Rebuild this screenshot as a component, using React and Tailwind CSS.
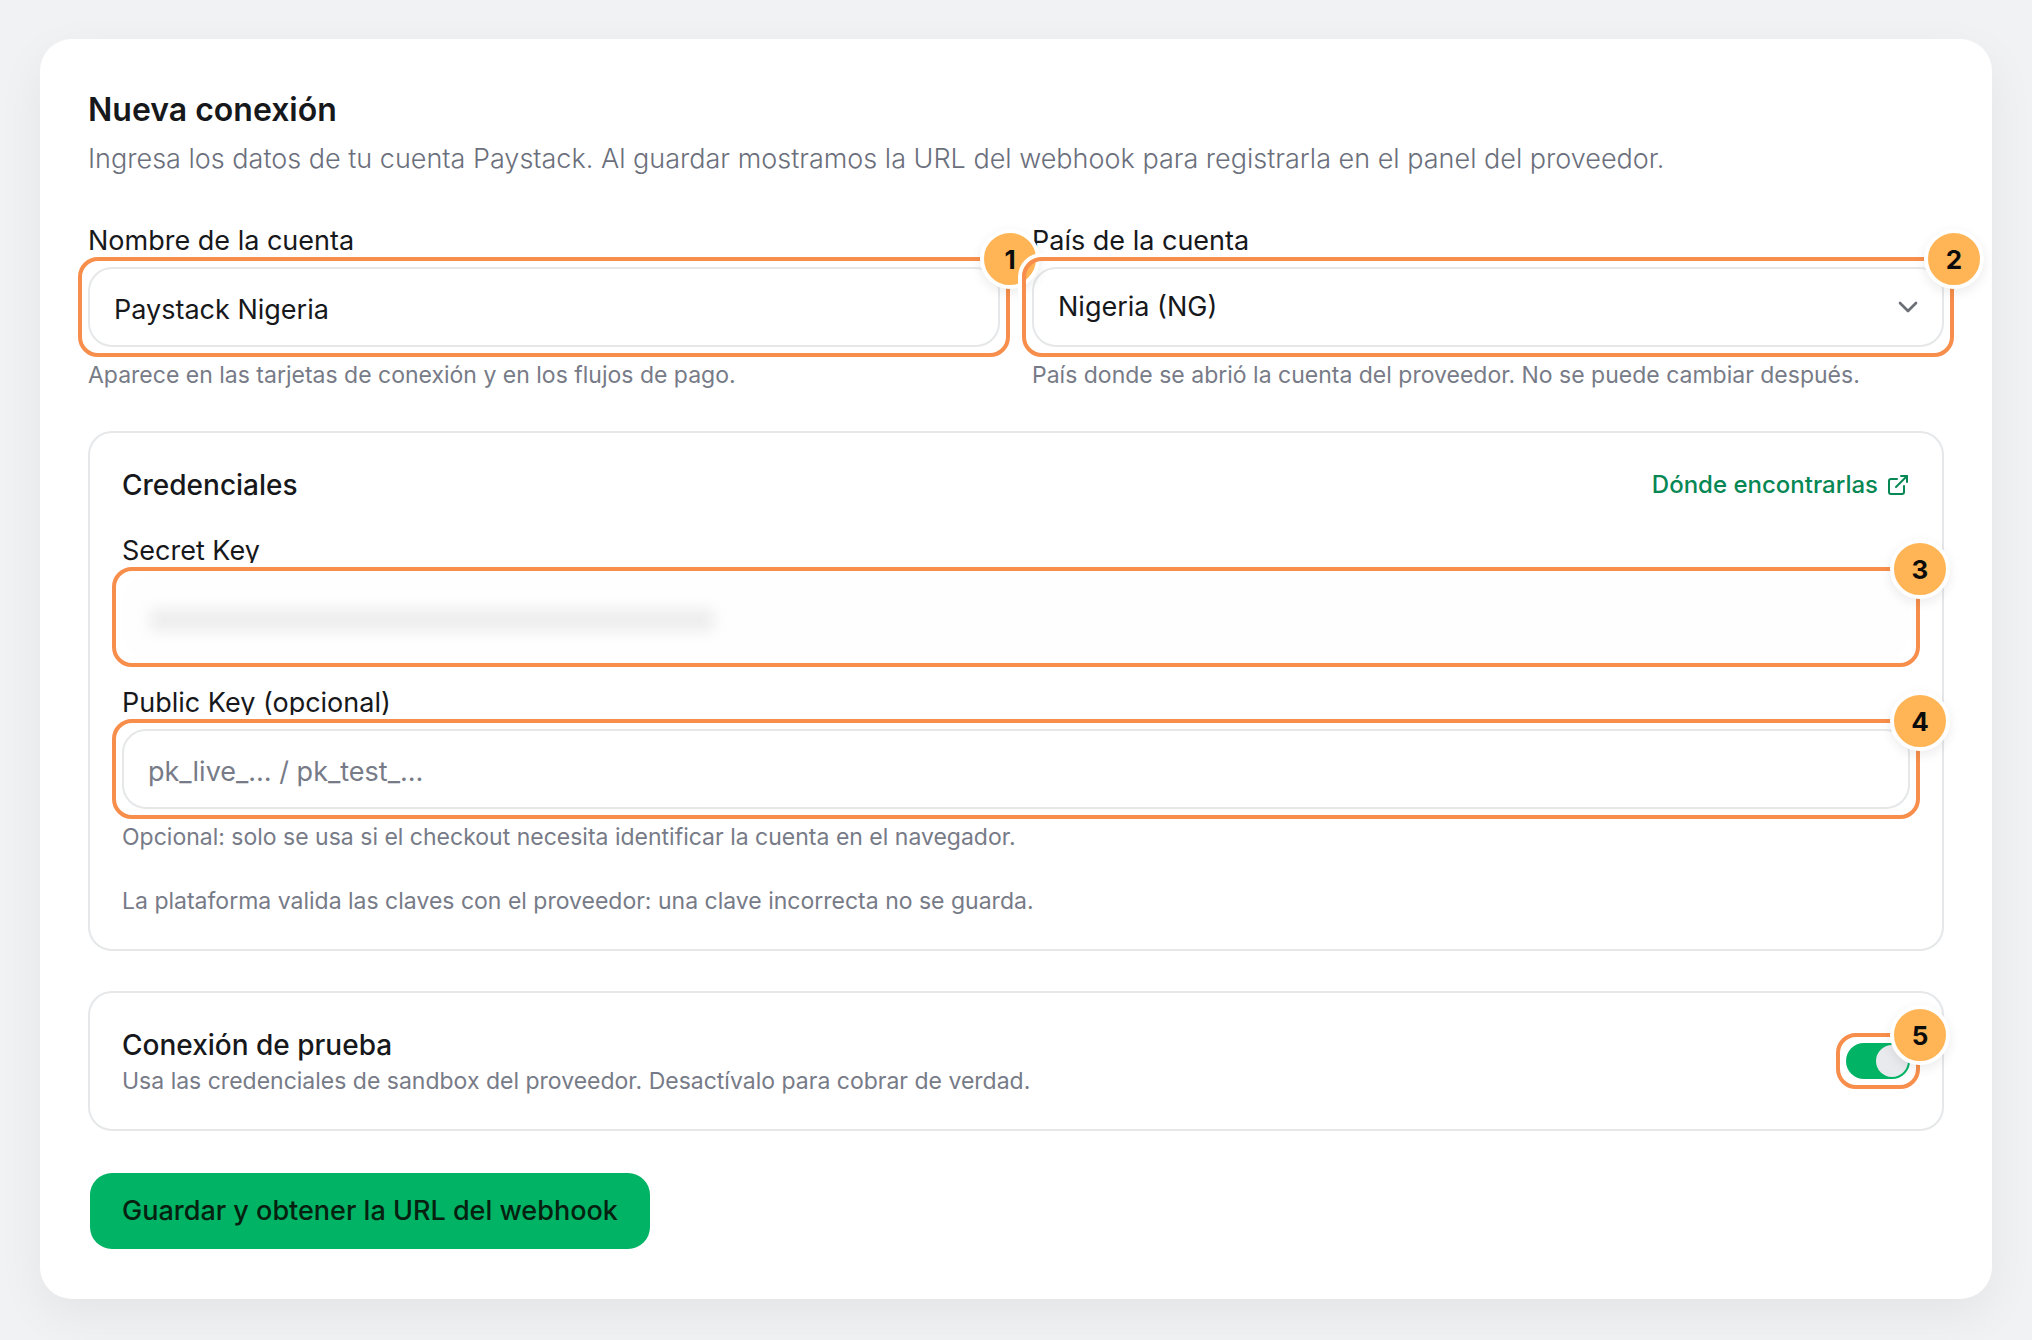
import { useState } from "react";
import { ChevronDown, ExternalLink } from "lucide-react";

const inputClass =
  "block h-20 w-full rounded-3xl border-2 border-[#e5e7e9] bg-white px-6 text-[27px] text-[#17181b] outline-none placeholder:text-[#777b87]";

function Marker({ number }) {
  return (
    <span className="pointer-events-none absolute -inset-2.5 z-10 rounded-[20px] border-4 border-[#f78e4b] shadow-[0_0_0_4px_#fff]">
      <span className="absolute -top-8 -right-[34px] flex size-15 items-center justify-center rounded-full border-4 border-white bg-[#ffb556] text-[26px] font-bold text-[#0c0c0c] shadow-[0_4px_12px_rgba(0,0,0,0.08)]">
        {number}
      </span>
    </span>
  );
}

function Field({ id, label, marker, hint, children }) {
  return (
    <div>
      <label htmlFor={id} className="mb-2 block text-[27px] leading-9">
        {label}
      </label>
      <div className="relative">
        {children}
        <Marker number={marker} />
      </div>
      {hint && <Hint className="mt-3">{hint}</Hint>}
    </div>
  );
}

function Hint({ className = "", children }) {
  return <p className={`text-[23px] leading-8 text-[#777b87] ${className}`}>{children}</p>;
}

export default function App() {
  const [name, setName] = useState("Paystack Nigeria");
  const [country, setCountry] = useState("NG");
  const [secretKey, setSecretKey] = useState("");
  const [publicKey, setPublicKey] = useState("");
  const [sandbox, setSandbox] = useState(true);

  return (
    <main className="min-h-screen bg-[#f1f2f4] px-10 pt-[39px] pb-10 font-['Inter',sans-serif] text-[#17181b]">
      <form
        onSubmit={(e) => e.preventDefault()}
        className="rounded-[32px] bg-white p-12 shadow-[0_16px_48px_rgba(0,0,0,0.06)]"
      >
        <header>
          <h1 className="text-[32px] leading-[46px] font-semibold">Nueva conexión</h1>
          <p className="mt-1.5 text-[27px] leading-10 font-light text-[#6b6f7c]">
            Ingresa los datos de tu cuenta Paystack. Al guardar mostramos la URL del webhook para registrarla en el
            panel del proveedor.
          </p>
        </header>

        <div className="mt-11 grid grid-cols-2 gap-8">
          <Field
            id="name"
            label="Nombre de la cuenta"
            marker={1}
            hint="Aparece en las tarjetas de conexión y en los flujos de pago."
          >
            <input
              id="name"
              type="text"
              value={name}
              onChange={(e) => setName(e.target.value)}
              className={`${inputClass} pt-1`}
            />
          </Field>
          <Field
            id="country"
            label="País de la cuenta"
            marker={2}
            hint="País donde se abrió la cuenta del proveedor. No se puede cambiar después."
          >
            <select
              id="country"
              value={country}
              onChange={(e) => setCountry(e.target.value)}
              className={`${inputClass} appearance-none`}
            >
              <option value="NG">Nigeria (NG)</option>
            </select>
            <ChevronDown size={32} className="pointer-events-none absolute top-6 right-5 text-[#6c6f75]" />
          </Field>
        </div>

        <section className="mt-10 rounded-3xl border-2 border-[#e5e7e9] p-8">
          <div className="flex items-center justify-between">
            <h2 className="text-[28px] leading-10 font-medium">Credenciales</h2>
            <a href="#credenciales" className="flex items-center gap-2 text-[24px] leading-8 font-medium text-[#078754]">
              Dónde encontrarlas
              <ExternalLink size={24} />
            </a>
          </div>

          <div className="mt-7 flex flex-col gap-7">
            <Field id="secret" label="Secret Key" marker={3}>
              <input
                id="secret"
                type="password"
                value={secretKey}
                onChange={(e) => setSecretKey(e.target.value)}
                className="block h-20 w-full rounded-3xl bg-[#fefefe] px-6 text-[27px] outline-none"
              />
              <span className="pointer-events-none absolute top-8 left-7 h-[22px] w-[564px] max-w-[90%] bg-[#ededed] blur-[7px]" />
            </Field>
            <Field
              id="public"
              label="Public Key (opcional)"
              marker={4}
              hint="Opcional: solo se usa si el checkout necesita identificar la cuenta en el navegador."
            >
              <input
                id="public"
                type="text"
                placeholder="pk_live_… / pk_test_…"
                value={publicKey}
                onChange={(e) => setPublicKey(e.target.value)}
                className={`${inputClass} pt-1`}
              />
            </Field>
          </div>

          <Hint className="mt-8">La plataforma valida las claves con el proveedor: una clave incorrecta no se guarda.</Hint>
        </section>

        <section className="mt-10 flex items-center justify-between rounded-3xl border-2 border-[#e5e7e9] p-8">
          <div>
            <label htmlFor="sandbox" className="block text-[28px] leading-10 font-medium">
              Conexión de prueba
            </label>
            <Hint>Usa las credenciales de sandbox del proveedor. Desactívalo para cobrar de verdad.</Hint>
          </div>
          <div className="relative">
            <input
              id="sandbox"
              type="checkbox"
              role="switch"
              checked={sandbox}
              onChange={(e) => setSandbox(e.target.checked)}
              className="block h-9 w-16 appearance-none rounded-full bg-[#d3d6da] p-0.5 before:block before:size-8 before:rounded-full before:bg-[#e9eaed] checked:bg-[#00b365] checked:before:ml-7"
            />
            <Marker number={5} />
          </div>
        </section>

        <button
          type="submit"
          className="mt-10 block h-20 rounded-3xl border-2 border-transparent bg-[#00b365] bg-clip-padding px-8 text-[27px] font-medium text-[#06210f]"
        >
          Guardar y obtener la URL del webhook
        </button>
      </form>
    </main>
  );
}
